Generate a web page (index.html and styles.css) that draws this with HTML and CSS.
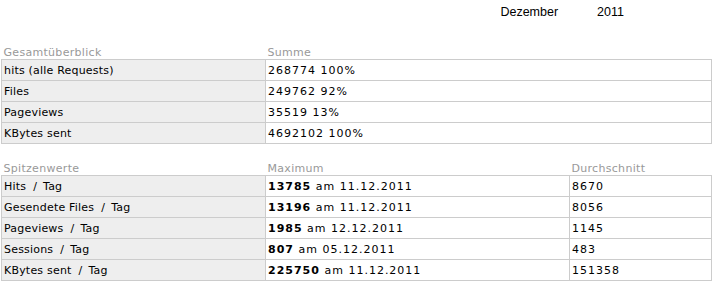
FILE: index.html
```html
<!DOCTYPE html>
<html lang="de">
<head>
<meta charset="utf-8">
<title>Statistik Dezember 2011</title>
<link rel="stylesheet" href="styles.css">
</head>
<body>
<div class="period">
  <span class="month">Dezember</span>
  <span class="year">2011</span>
</div>

<table class="stats">
  <colgroup><col class="c1"><col class="c2"></colgroup>
  <thead>
    <tr><th>Gesamtüberblick</th><th>Summe</th></tr>
  </thead>
  <tbody>
    <tr><td class="label">hits (alle Requests)</td><td class="val">268774 100%</td></tr>
    <tr><td class="label">Files</td><td class="val">249762 92%</td></tr>
    <tr><td class="label">Pageviews</td><td class="val">35519 13%</td></tr>
    <tr><td class="label">KBytes sent</td><td class="val">4692102 100%</td></tr>
  </tbody>
</table>

<table class="stats peak">
  <colgroup><col class="c1"><col class="c2b"><col class="c3"></colgroup>
  <thead>
    <tr><th>Spitzenwerte</th><th>Maximum</th><th>Durchschnitt</th></tr>
  </thead>
  <tbody>
    <tr><td class="label">Hits<span class="sep">/</span>Tag</td><td class="val"><b>13785</b> am 11.12.2011</td><td class="val">8670</td></tr>
    <tr><td class="label">Gesendete Files<span class="sep">/</span>Tag</td><td class="val"><b>13196</b> am 11.12.2011</td><td class="val">8056</td></tr>
    <tr><td class="label">Pageviews<span class="sep">/</span>Tag</td><td class="val"><b>1985</b> am 12.12.2011</td><td class="val">1145</td></tr>
    <tr><td class="label">Sessions<span class="sep">/</span>Tag</td><td class="val"><b>807</b> am 05.12.2011</td><td class="val">483</td></tr>
    <tr><td class="label">KBytes sent<span class="sep">/</span>Tag</td><td class="val"><b>225750</b> am 11.12.2011</td><td class="val">151358</td></tr>
  </tbody>
</table>
</body>
</html>
```

FILE: styles.css
```css
html, body {
  margin: 0;
  padding: 0;
  background: #ffffff;
}

body {
  font-family: "DejaVu Sans", Verdana, sans-serif;
  font-size: 11px;
  color: #000000;
}

.period {
  display: flex;
  justify-content: flex-end;
  gap: 39px;
  padding: 5px 91px 0 0;
  font-family: "Liberation Sans", Arial, sans-serif;
  font-size: 12.5px;
  line-height: 15px;
  color: #000000;
}

.stats {
  border-collapse: collapse;
  table-layout: fixed;
  width: 710px;
  margin: 27px 0 0 1px;
}

.stats.peak {
  margin-top: 19px;
}

.c1 { width: 264px; }
.c2 { width: 446px; }
.c2b { width: 304px; }
.c3 { width: 142px; }

.stats th {
  font-weight: normal;
  text-align: left;
  color: #999999;
  padding: 0 2px;
  line-height: 12px;
  letter-spacing: 0.3px;
  border: none;
}

.stats td {
  border: 1px solid #cccccc;
  padding: 4px 2px 3px 2px;
  line-height: 13px;
  white-space: nowrap;
  background: #ffffff;
}

.stats td.label {
  background: #eeeeee;
  letter-spacing: 0.2px;
}

.stats .sep {
  padding: 0 6px 0 7px;
}

.stats td.val {
  letter-spacing: 1px;
}

.stats b {
  font-weight: bold;
}
```
